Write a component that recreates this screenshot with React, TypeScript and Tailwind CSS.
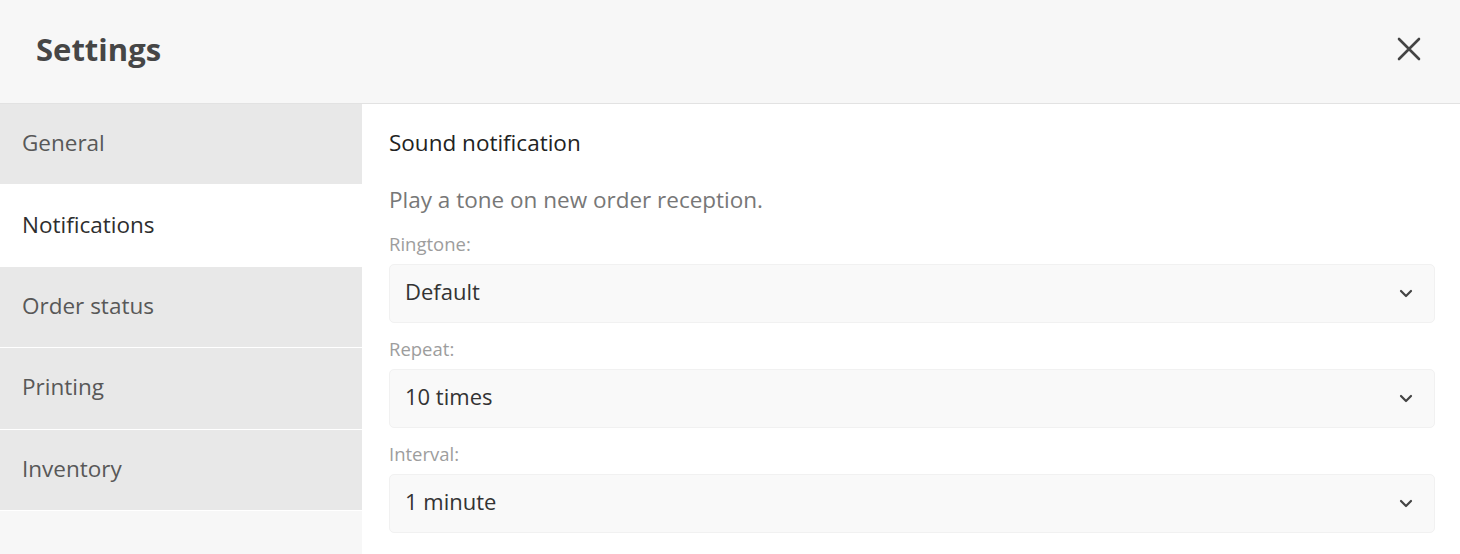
import { useState } from 'react';

const sections = ['General', 'Notifications', 'Order status', 'Printing', 'Inventory'];

const fields = [
  { label: 'Ringtone:', value: 'Default' },
  { label: 'Repeat:', value: '10 times' },
  { label: 'Interval:', value: '1 minute' },
];

function Chevron() {
  return (
    <svg width="14" height="9" viewBox="0 0 14 9" fill="none" stroke="#444" strokeWidth="2.2" strokeLinecap="round" strokeLinejoin="round">
      <path d="M2 2l5 5 5-5" />
    </svg>
  );
}

function CloseIcon() {
  return (
    <svg width="24" height="24" viewBox="0 0 24 24" fill="none" stroke="#444" strokeWidth="2.6" strokeLinecap="round">
      <path d="M2 2l20 20M22 2L2 22" />
    </svg>
  );
}

export default function App() {
  const [active, setActive] = useState('Notifications');

  return (
    <div className="flex flex-col w-[1460px] h-[554px] overflow-hidden bg-white font-['Open_Sans',sans-serif]">
      <header className="flex items-center justify-between h-[104px] shrink-0 px-9 pb-[5px] bg-[#f7f7f7] border-b border-[#e2e2e2]">
        <h1 className="text-[31px] font-bold text-[#464646]">Settings</h1>
        <button className="mr-[3px] text-[#444]">
          <CloseIcon />
        </button>
      </header>

      <div className="flex flex-1 min-h-0">
        <nav className="flex flex-col w-[362px] shrink-0 bg-[#f7f7f7]">
          {sections.map((s) => (
            <button
              key={s}
              onClick={() => setActive(s)}
              className={
                s === active
                  ? 'flex items-center h-[81.4px] px-[22px] pb-[2px] text-left text-[22.5px] text-[#2e2e2e] bg-white border-b border-white'
                  : 'flex items-center h-[81.4px] px-[22px] pb-[2px] text-left text-[22.5px] text-[#585858] bg-[#e8e8e8] border-b border-white'
              }
            >
              {s}
            </button>
          ))}
        </nav>

        <main className="flex-1 pl-[27px] pr-[25px] pt-[25px]">
          <h2 className="text-[22.5px] leading-7 text-[#222]">Sound notification</h2>
          <p className="mt-[29px] text-[22.5px] leading-7 text-[#777]">Play a tone on new order reception.</p>
          <div className="mt-[18px]">
            {fields.map((f, i) => (
              <div key={f.label} className={i > 0 ? 'mt-[14px]' : ''}>
                <div className="leading-6 text-[18.5px] text-[#9d9d9d]">{f.label}</div>
                <div className="mt-2 flex items-center justify-between h-[59px] pl-[15px] pr-[21px] rounded-[5px] bg-[#f9f9f9] border border-[#f1f1f1]">
                  <span className="pb-[5px] text-[22px] text-[#333]">{f.value}</span>
                  <Chevron />
                </div>
              </div>
            ))}
          </div>
        </main>
      </div>
    </div>
  );
}
